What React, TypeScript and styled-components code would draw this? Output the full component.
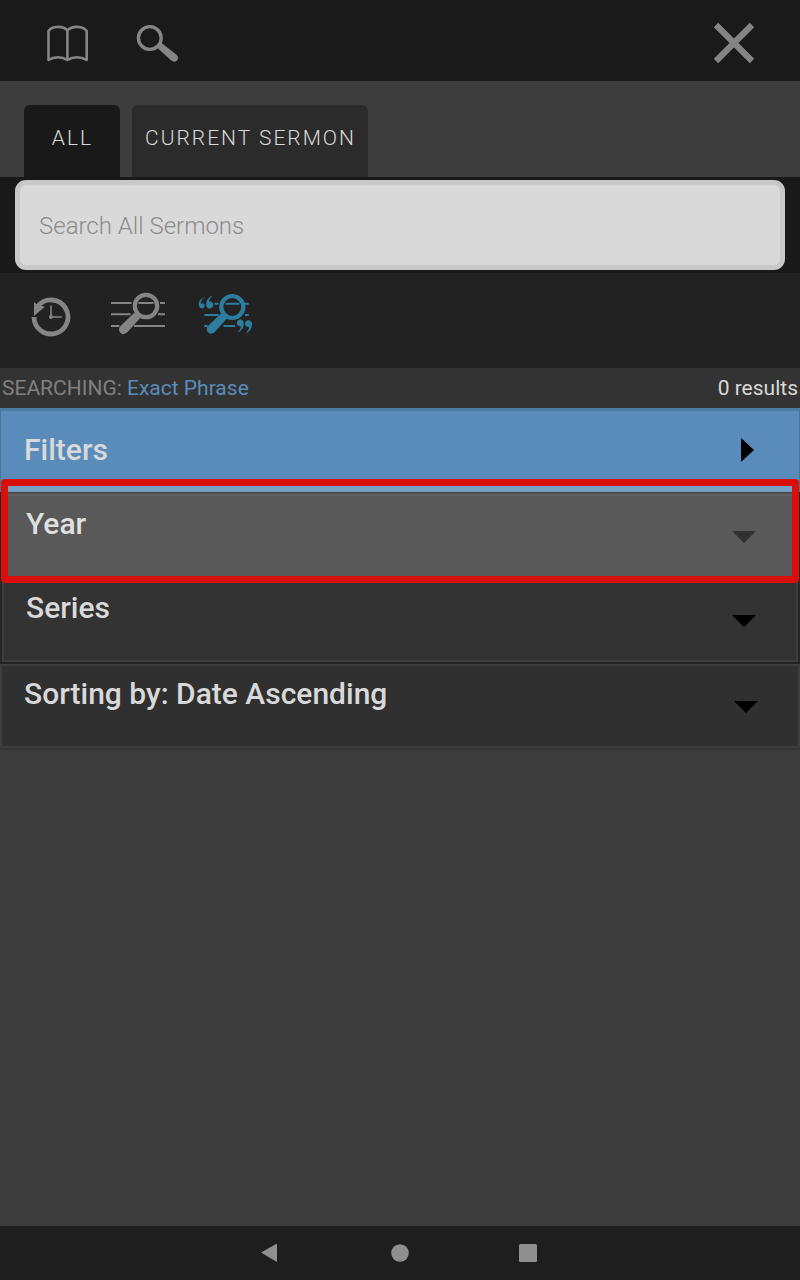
import React from 'react';
import styled, { createGlobalStyle } from 'styled-components';

const GlobalStyle = createGlobalStyle`
  *, *::before, *::after { box-sizing: border-box; }
  body {
    margin: 0;
    background: #3d3d3d;
    font-family: Roboto, "Liberation Sans", sans-serif;
    color: #d9d9d9;
  }
  button, input, select { font: inherit; color: inherit; }
`;

const Page = styled.div`
  min-height: 100vh;
  display: flex;
  flex-direction: column;
`;

const Header = styled.header`
  display: flex;
  align-items: center;
  gap: 47px;
  min-height: 81px;
  padding: 5px 45px 0 46px;
  background: #1a1a1a;
  color: #858585;
`;

const IconButton = styled.button<{ $end?: boolean; $active?: boolean }>`
  display: flex;
  padding: 0;
  border: 0;
  background: none;
  cursor: pointer;
  margin-left: ${(p) => (p.$end ? 'auto' : '0')};
  color: ${(p) => (p.$active ? '#2d7d9f' : '#858585')};
`;

const Tabs = styled.div`
  display: flex;
  gap: 12px;
  padding: 24px 24px 0;
`;

const Tab = styled.button<{ $active?: boolean }>`
  min-width: 96px;
  height: 72px;
  padding: 0 12px 7px 13px;
  border: 0;
  border-radius: 6px 6px 0 0;
  background: ${(p) => (p.$active ? '#191919' : '#2b2b2b')};
  font-size: 21px;
  font-weight: 300;
  letter-spacing: 2px;
  text-transform: uppercase;
  cursor: pointer;
`;

const SearchBar = styled.form`
  padding: 3px 15px;
  background: #191919;
`;

const SearchInput = styled.input`
  display: block;
  width: 100%;
  height: 90px;
  padding: 2px 19px 0;
  border: 5px solid #c8c8c8;
  border-radius: 11px;
  background: #d9d9d9;
  color: #333;
  font-size: 24px;
  font-weight: 300;
  outline: 0;
  &::placeholder { color: #8c8c8c; opacity: 1; }
`;

const Toolbar = styled.div`
  display: flex;
  align-items: center;
  min-height: 95px;
  padding: 0 31px 14px;
  gap: 32px;
  background: #222;
`;

const HistorySlot = styled.div`
  padding: 6px 7px 0 0;
`;

const Status = styled.div`
  display: flex;
  align-items: center;
  justify-content: space-between;
  height: 40px;
  padding: 0 2px;
  background: #333;
  font-size: 21px;
`;

const StatusLabel = styled.span`
  color: #808080;
`;

const ModeLink = styled.a`
  color: #5a8cbb;
  text-decoration: none;
`;

const FiltersButton = styled.button`
  display: flex;
  align-items: center;
  justify-content: space-between;
  width: 100%;
  height: 84px;
  padding: 0 45px 3px 23px;
  border: 1px solid #4b7398;
  border-top: 3px solid #4b7aa5;
  background: #5a8cbb;
  font-size: 30px;
  font-weight: 500;
  cursor: pointer;
`;

const Group = styled.div`
  padding: 2px;
  background: #262626;
`;

const Row = styled.div<{ $shade?: string }>`
  position: relative;
  display: grid;
  align-items: center;
  border: 2px solid #3d3d3d;
  background: ${(p) => p.$shade ?? '#333'};
`;

const SortRow = styled(Row)`
  box-shadow: 0 1px 3px rgba(0, 0, 0, 0.3);
`;

const RowSelect = styled.select`
  grid-area: 1 / 1;
  width: 100%;
  height: 80px;
  padding: 0 80px 26px 22px;
  border: 0;
  background: transparent;
  appearance: none;
  font-size: 30px;
  font-weight: 500;
  outline: 0;
  cursor: pointer;
`;

const Caret = styled.svg`
  grid-area: 1 / 1;
  justify-self: end;
  margin: 2px 40px 0 0;
  pointer-events: none;
`;

const Highlight = styled.div`
  position: absolute;
  z-index: 1;
  inset: -17px -3px -7px;
  border: 7px solid #da0f09;
  border-radius: 4px;
  background: rgba(255, 255, 255, 0.19);
  background-clip: padding-box;
  pointer-events: none;
`;

const Main = styled.main`
  flex: 1;
`;

const NavBar = styled.nav`
  display: flex;
  justify-content: center;
  gap: 80px;
  height: 54px;
  background: #1e1e1e;
`;

const NavButton = styled.button`
  display: flex;
  align-items: center;
  justify-content: center;
  width: 48px;
  padding: 0;
  border: 0;
  background: none;
  cursor: pointer;
`;

const BookIcon = () => (
  <svg width="43" height="37" viewBox="0 0 43 37" fill="none" stroke="currentColor" strokeWidth="2.6" strokeLinejoin="round">
    <path d="M2.5 35V6C6 .8 17 .3 21.4 5.5C26 .3 37 .8 40.7 6V35C35 31.3 27 31.3 21.4 35C16 31.3 8 31.3 2.5 35ZM21.4 5.5V35" />
  </svg>
);

const MagnifierIcon = () => (
  <svg width="43" height="39" viewBox="0 0 43 39">
    <circle cx="13.8" cy="14" r="11.4" fill="none" stroke="currentColor" strokeWidth="3.4" />
    <path d="M20.6 23.3L25.2 18.8L40.3 30.6Q43.4 33.5 41 36.4Q38.6 39 35.2 36.6Z" fill="currentColor" />
  </svg>
);

const CloseIcon = () => (
  <svg width="42" height="42" viewBox="0 0 42 42" stroke="currentColor" strokeWidth="6.2">
    <path d="M3 3L39 39M39 3L3 39" />
  </svg>
);

const HistoryIcon = () => (
  <svg width="40" height="40" viewBox="0 0 40 40" fill="none" stroke="currentColor">
    <path d="M3 20A17 17 0 1 0 7 9" strokeWidth="4.8" />
    <path d="M3 5L6.6 8L14 9.8L3 19Z" fill="currentColor" stroke="none" />
    <path d="M20 8.5V20H30.7" strokeWidth="1.6" />
    <circle cx="20" cy="20" r="2" fill="currentColor" stroke="none" />
  </svg>
);

const TextSearchIcon = () => (
  <svg width="56" height="44" viewBox="0 0 56 44" fill="none" stroke="currentColor">
    <path d="M1 11H21.5M28.5 11H43.5M50 11H55M1 22.2H20.5M48 22.2H55M1 34H9.5M24 34H55" strokeWidth="2" />
    <circle cx="36" cy="14" r="11.2" strokeWidth="4.2" />
    <path d="M24.3 20.8L30 26.2L17.6 40Q13.4 44 10 40.6Q7.6 37 11 33.6Z" fill="currentColor" stroke="none" />
  </svg>
);

const closingQuote = 'M3.5 0C6 0 7.4 2 7 5C6.5 9 4 12 .5 13C3 10.5 4.2 9 4 6.8C1.5 7.2 0 5.4 0 3.5C0 1.5 1.5 0 3.5 0Z';

const PhraseSearchIcon = () => (
  <svg width="56" height="44" viewBox="0 0 56 44" fill="none" stroke="currentColor">
    <path d="M16.5 11.7H20.5M27.5 11.7H41.5M46 11.7H50.7M6.3 23H20.5M47 23H50.7M6.3 34H9.7M25.5 34H37" strokeWidth="2" />
    <circle cx="34.3" cy="15" r="11" strokeWidth="4.2" />
    <path d="M23 21.4L28.6 26.8L17 39.8Q13 43.4 9.6 40Q7.4 36.8 10.6 33.6Z" fill="currentColor" stroke="none" />
    <g fill="currentColor" stroke="none">
      <path d={closingQuote} transform="translate(38.8 27.5)" />
      <path d={closingQuote} transform="translate(47 28.2)" />
      <path d={closingQuote} transform="translate(15.2 16.4) rotate(180)" />
      <path d="M6.8 5.2C3 6.4 .6 9 .8 12.4C1 15.6 3.4 17 5.4 16C7 15 7.2 12.6 5.6 11.6C4.4 10.8 3.4 11.4 2.8 12C2.4 9.4 4.2 7 6.8 5.2Z" />
    </g>
  </svg>
);

const DownCaret = () => (
  <Caret width="24" height="12" viewBox="0 0 24 12" aria-hidden="true">
    <path d="M0 0H24L12 12Z" fill="#000" />
  </Caret>
);

interface PickerProps {
  label: string;
  text: string;
}

const Picker = ({ label, text }: PickerProps) => (
  <>
    <RowSelect aria-label={label} defaultValue={text}>
      <option>{text}</option>
    </RowSelect>
    <DownCaret />
  </>
);

export default function App() {
  return (
    <Page>
      <GlobalStyle />
      <Header>
        <IconButton aria-label="Library"><BookIcon /></IconButton>
        <IconButton aria-label="Search"><MagnifierIcon /></IconButton>
        <IconButton aria-label="Close" $end><CloseIcon /></IconButton>
      </Header>
      <Tabs role="tablist">
        <Tab role="tab" aria-selected $active>All</Tab>
        <Tab role="tab" aria-selected={false}>Current Sermon</Tab>
      </Tabs>
      <SearchBar onSubmit={(e) => e.preventDefault()}>
        <SearchInput type="text" aria-label="Search All Sermons" placeholder="Search All Sermons" />
      </SearchBar>
      <Toolbar>
        <HistorySlot>
          <IconButton aria-label="Search history"><HistoryIcon /></IconButton>
        </HistorySlot>
        <IconButton aria-label="Search all words"><TextSearchIcon /></IconButton>
        <IconButton aria-label="Search exact phrase" $active><PhraseSearchIcon /></IconButton>
      </Toolbar>
      <Status>
        <span>
          <StatusLabel>SEARCHING: </StatusLabel>
          <ModeLink href="#mode">Exact Phrase</ModeLink>
        </span>
        <span>0 results</span>
      </Status>
      <Main>
        <FiltersButton aria-expanded>
          Filters
          <svg width="13" height="24" viewBox="0 0 13 24" aria-hidden="true">
            <path d="M0 0L13 12L0 24Z" fill="#000" />
          </svg>
        </FiltersButton>
        <Group>
          <Row>
            <Picker label="Year" text="Year" />
            <Highlight />
          </Row>
          <Row>
            <Picker label="Series" text="Series" />
          </Row>
        </Group>
        <SortRow $shade="#303030">
          <Picker label="Sort order" text="Sorting by: Date Ascending" />
        </SortRow>
      </Main>
      <NavBar aria-label="System">
        <NavButton aria-label="Back">
          <svg width="24" height="20" viewBox="0 0 24 20"><path d="M1 9.5L16 1Q17 .6 17 1.6V18Q17 19 16 18.4Z" fill="#8f8f8f" /></svg>
        </NavButton>
        <NavButton aria-label="Home">
          <svg width="18" height="18" viewBox="0 0 18 18"><circle cx="9" cy="9" r="8.8" fill="#8f8f8f" /></svg>
        </NavButton>
        <NavButton aria-label="Recent apps">
          <svg width="18" height="18" viewBox="0 0 18 18"><rect width="18" height="18" rx="1.5" fill="#8f8f8f" /></svg>
        </NavButton>
      </NavBar>
    </Page>
  );
}
